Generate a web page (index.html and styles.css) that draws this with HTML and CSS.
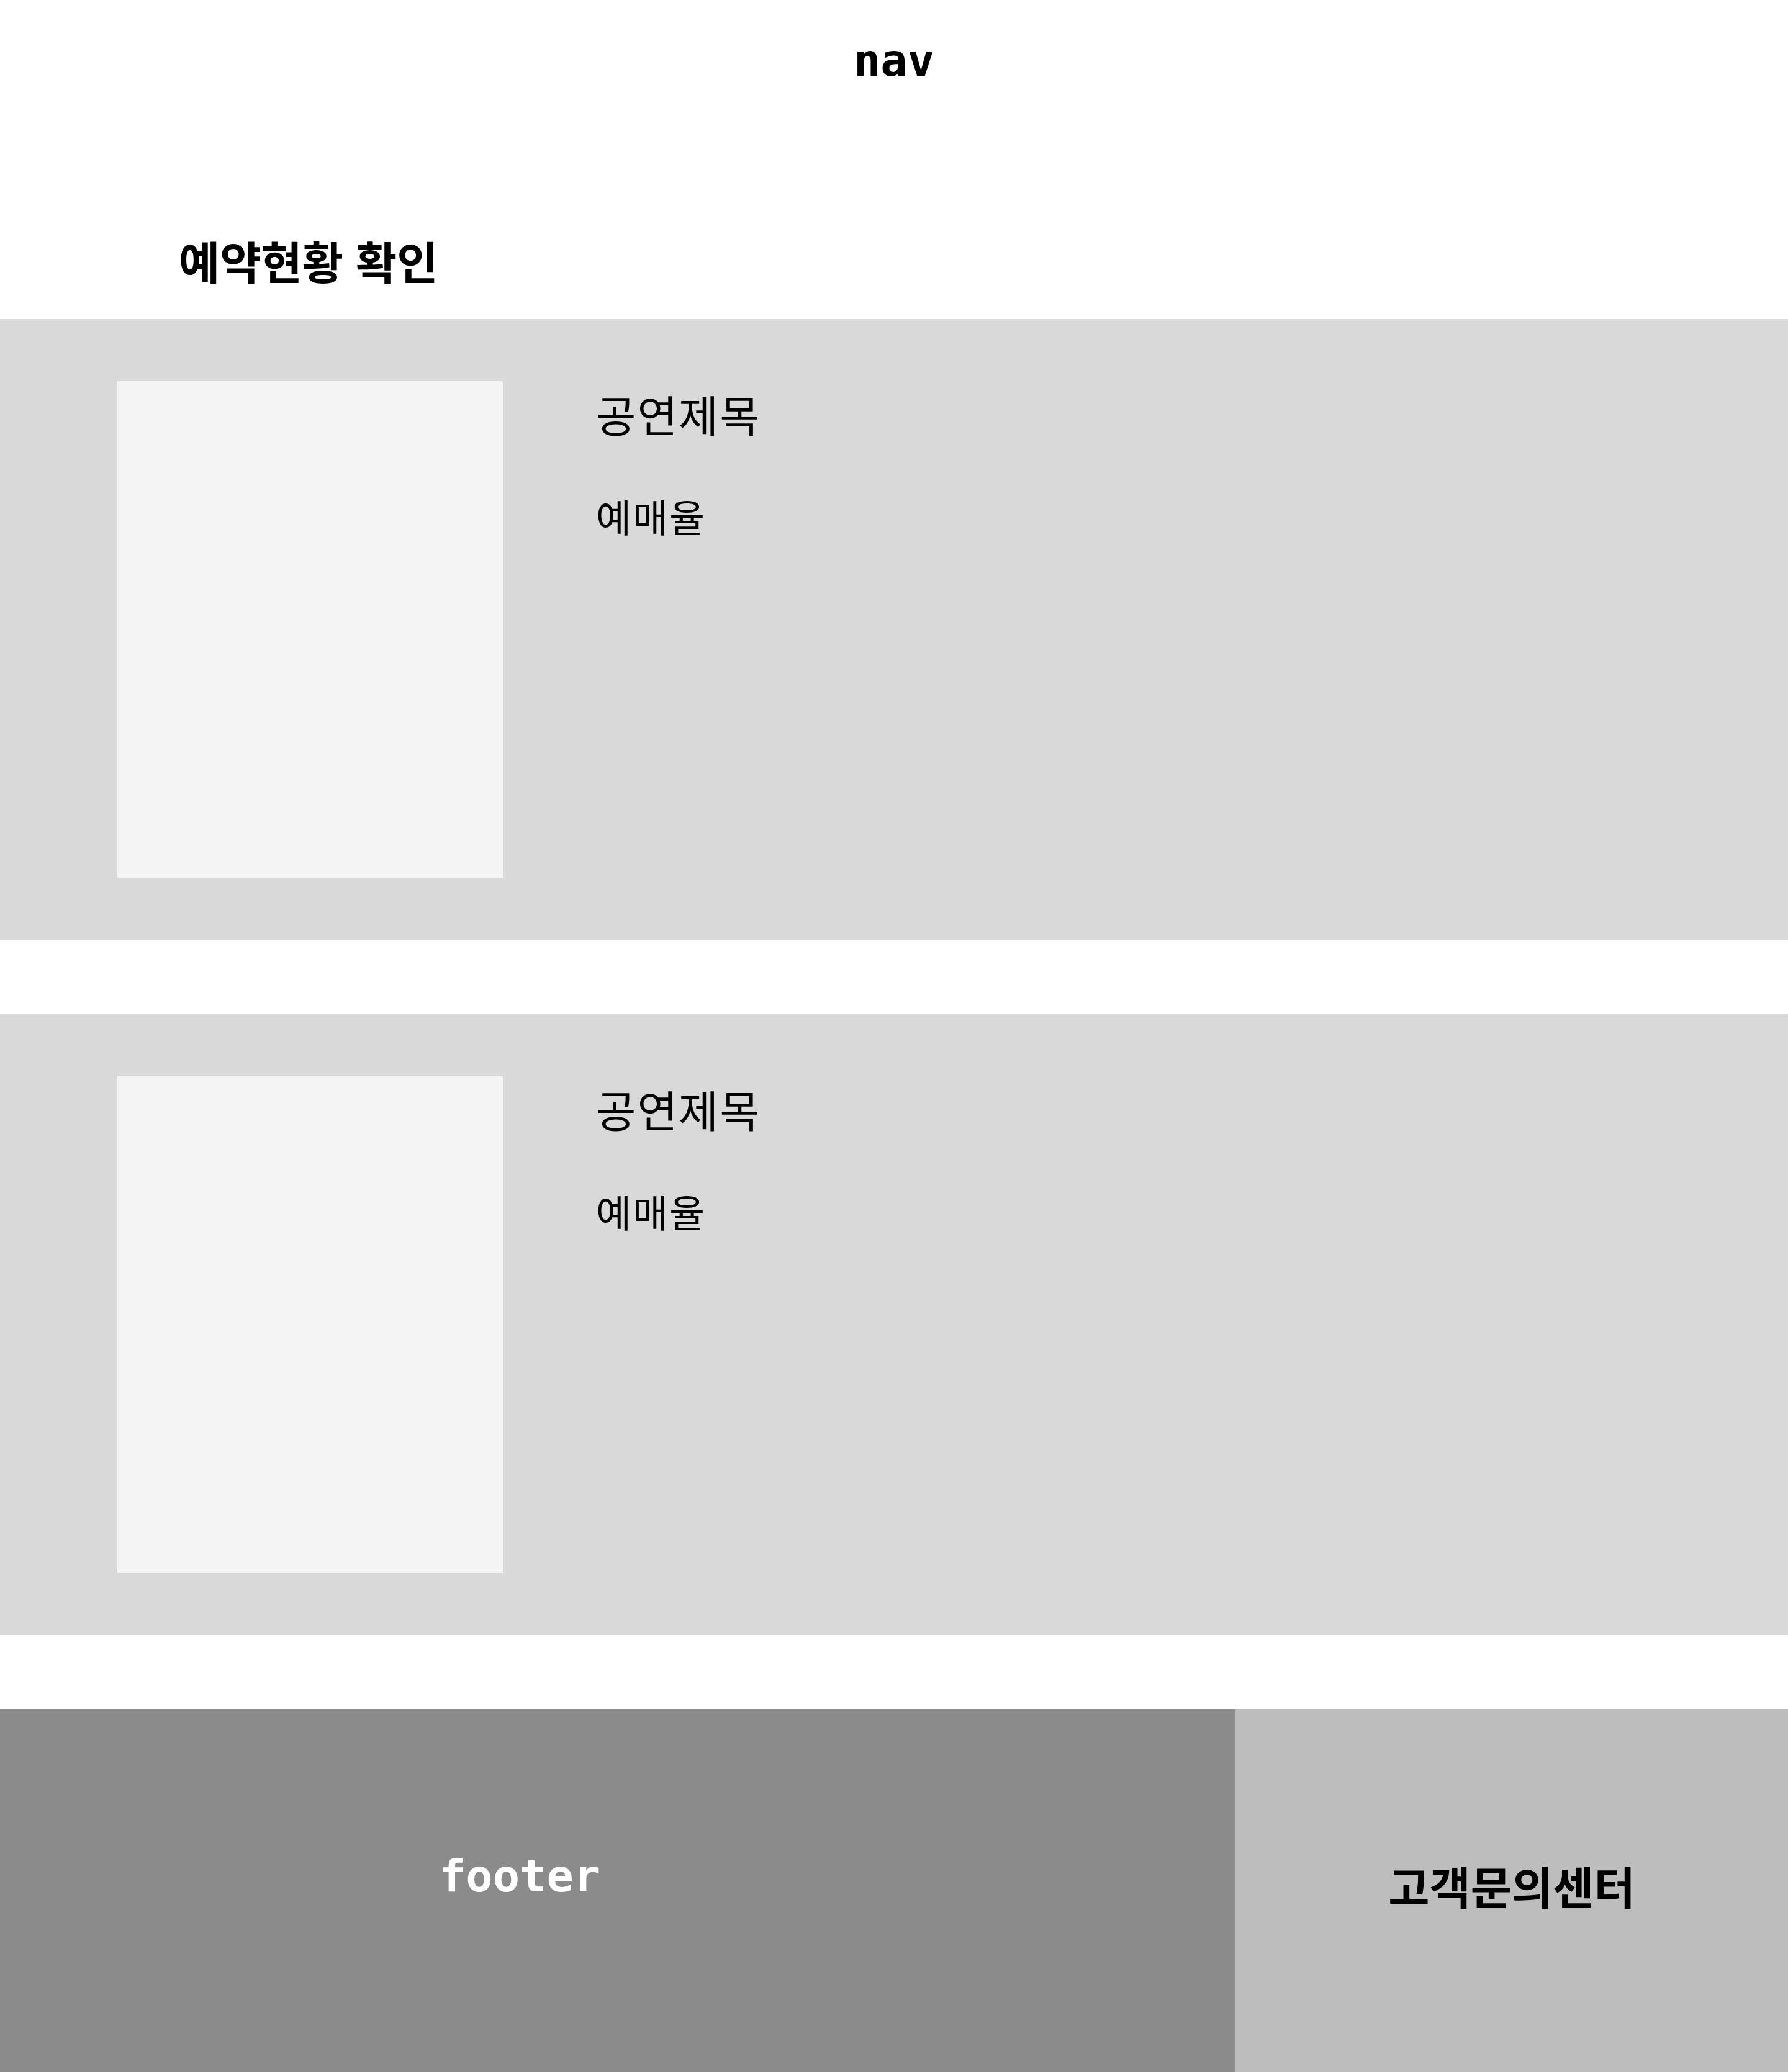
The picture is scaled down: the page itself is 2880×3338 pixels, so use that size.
FILE: index.html
```html
<!DOCTYPE html>
<html lang="ko">
<head>
<meta charset="utf-8">
<title>예약현황 확인</title>
<link rel="stylesheet" href="styles.css">
</head>
<body>
<nav class="nav">nav</nav>
<main>
  <h1 class="page-title">예약현황 확인</h1>
  <section class="booking">
    <div class="poster"></div>
    <div class="info">
      <p class="show-title">공연제목</p>
      <p class="rate">예매율</p>
    </div>
  </section>
  <section class="booking">
    <div class="poster"></div>
    <div class="info">
      <p class="show-title">공연제목</p>
      <p class="rate">예매율</p>
    </div>
  </section>
</main>
<footer class="footer">
  <div class="footer-main"><span class="footer-label">footer</span></div>
  <div class="footer-help"><span class="help-label">고객문의센터</span></div>
</footer>
</body>
</html>
```

FILE: styles.css
```css
* { box-sizing: border-box; }
html, body { margin: 0; padding: 0; background: #ffffff; }
body {
  width: 2880px;
  font-family: "Noto Sans CJK KR", "Noto Sans", sans-serif;
  color: #000;
}
.nav {
  padding-top: 61px;
  height: 133px;
  text-align: center;
  font-family: "DejaVu Sans Mono", monospace;
  font-weight: 700;
  font-size: 72px;
  line-height: 72px;
}
.page-title {
  margin: 250px 0 59px 0;
  padding-left: 288px;
  font-size: 72px;
  line-height: 72px;
  font-weight: 700;
  letter-spacing: 0;
}
.booking {
  display: flex;
  align-items: flex-start;
  background: #d9d9d9;
  height: 1000px;
  padding: 100px 0 100px 189px;
  margin-bottom: 120px;
}
.poster {
  width: 621px;
  height: 800px;
  background: #f4f4f4;
  flex: none;
}
.info {
  margin-left: 150px;
  padding-top: 18px;
}
.show-title {
  margin: 0;
  font-size: 70px;
  line-height: 70px;
  font-weight: 400;
  letter-spacing: 2px;
}
.rate {
  margin: 98px 0 0 0;
  font-size: 62px;
  line-height: 62px;
  font-weight: 400;
  letter-spacing: 2px;
}
.footer {
  display: flex;
  height: 584px;
}
.footer-main {
  width: 1990px;
  background: #8b8b8b;
  padding: 232px 0 0 707px;
}
.footer-label {
  display: block;
  font-family: "DejaVu Sans Mono", monospace;
  font-weight: 700;
  font-size: 72px;
  line-height: 72px;
  color: #ffffff;
}
.footer-help {
  flex: 1;
  background: #bdbdbd;
  padding-top: 247px;
  text-align: center;
}
.help-label {
  display: block;
  font-size: 72px;
  line-height: 72px;
  font-weight: 700;
  letter-spacing: 0;
}
```
